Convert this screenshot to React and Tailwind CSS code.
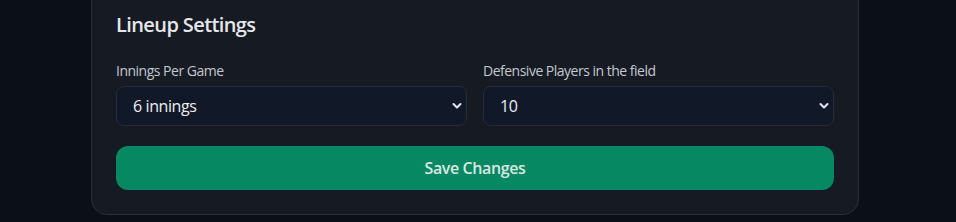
const Chevron = () => (
  <svg
    className="pointer-events-none absolute right-[5px] top-1/2 -translate-y-1/2"
    width="10"
    height="7"
    viewBox="0 0 10 7"
    fill="none"
  >
    <path d="M1.5 1.5 L5 5 L8.5 1.5" stroke="#e5e7eb" strokeWidth="2" strokeLinecap="round" strokeLinejoin="round" />
  </svg>
);

const SelectField = ({ label, value, options }) => (
  <div className="flex flex-col">
    <label className="mb-[5px] text-sm leading-5 tracking-[-0.5px] text-[#c3c8d1]">{label}</label>
    <div className="relative">
      <select
        defaultValue={value}
        className="h-10 w-full appearance-none rounded-lg border border-[#262c38] bg-[#111827] pl-4 pr-8 text-base tracking-[-0.4px] text-[#eceef1] outline-none"
      >
        {options.map((o) => (
          <option key={o}>{o}</option>
        ))}
      </select>
      <Chevron />
    </div>
  </div>
);

export default function App() {
  return (
    <div
      className="flex h-[222px] w-full overflow-hidden bg-[#0b0f17]"
      style={{ fontFamily: '"Open Sans", "Noto Sans", sans-serif' }}
    >
      <div className="ml-[91px] mt-[-40px] h-fit w-[768px] rounded-2xl border border-[#2a2f3a] bg-[#161a22] px-6 pb-6 pt-[50px]">
        <h2 className="mb-[22px] text-xl font-semibold leading-7 tracking-[-0.6px] text-[#e5e7eb]">Lineup Settings</h2>
        <div className="grid grid-cols-2 gap-4">
          <SelectField
            label="Innings Per Game"
            value="6 innings"
            options={["5 innings", "6 innings", "7 innings", "9 innings"]}
          />
          <SelectField
            label="Defensive Players in the field"
            value="10"
            options={["9", "10", "11"]}
          />
        </div>
        <button className="mt-5 h-11 w-full rounded-xl bg-[#068862] text-base font-semibold tracking-[-0.4px] text-[#dbe7e3]">
          Save Changes
        </button>
      </div>
    </div>
  );
}
